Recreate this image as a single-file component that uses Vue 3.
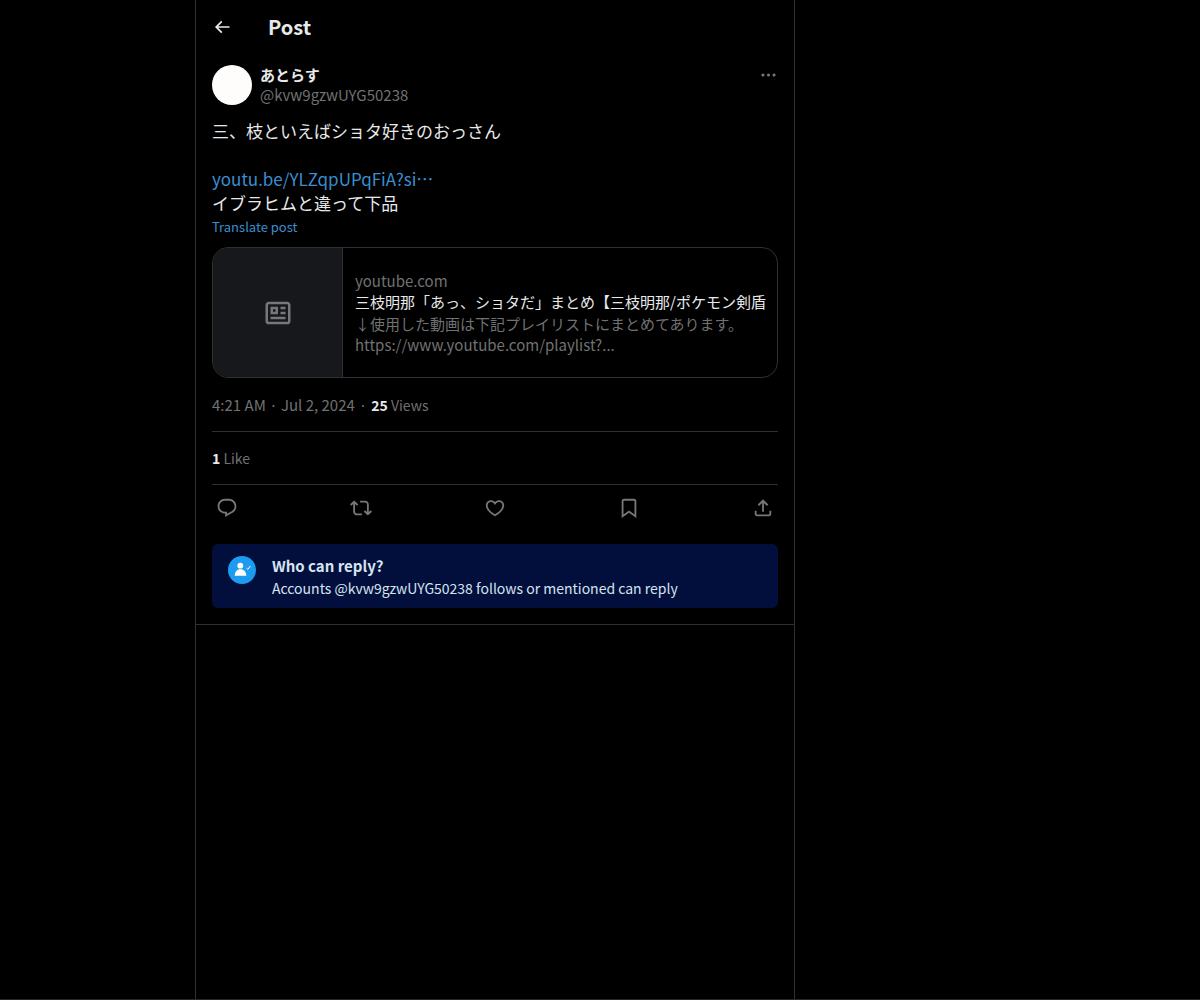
<script setup>
import { ref } from "vue";

const author = {
  name: "あとらす",
  handle: "@kvw9gzwUYG50238"
};

const card = {
  domain: "youtube.com",
  title: "三枝明那「あっ、ショタだ」まとめ【三枝明那/ポケモン剣盾",
  description: "↓使用した動画は下記プレイリストにまとめてあります。",
  url: "https://www.youtube.com/playlist?..."
};

const actions = ref([
  {
    label: "Reply",
    path: "M1.751 10c0-4.42 3.584-8 8.005-8h4.366c4.49 0 8.129 3.64 8.129 8.13 0 2.96-1.607 5.68-4.196 7.11l-8.054 4.46v-3.69h-.067c-4.49.1-8.183-3.51-8.183-8.01zm8.005-6c-3.317 0-6.005 2.69-6.005 6 0 3.37 2.77 6.08 6.138 6.01l.351-.01h1.761v2.3l5.087-2.81c1.951-1.08 3.163-3.13 3.163-5.36 0-3.39-2.744-6.13-6.129-6.13H9.756z"
  },
  {
    label: "Repost",
    path: "M4.5 3.88l4.432 4.14-1.364 1.46L5.5 7.55V16c0 1.1.896 2 2 2H13v2H7.5c-2.209 0-4-1.79-4-4V7.55L1.432 9.48.068 8.02 4.5 3.88zM16.5 6H11V4h5.5c2.209 0 4 1.79 4 4v8.45l2.068-1.93 1.364 1.46-4.432 4.14-4.432-4.14 1.364-1.46 2.068 1.93V8c0-1.1-.896-2-2-2z"
  },
  {
    label: "Like",
    path: "M16.697 5.5c-1.222-.06-2.679.51-3.89 2.16l-.805 1.09-.806-1.09C9.984 6.01 8.526 5.44 7.304 5.5c-1.243.07-2.349.78-2.91 1.91-.552 1.12-.633 2.78.479 4.82 1.074 1.97 3.257 4.27 7.129 6.61 3.87-2.34 6.052-4.64 7.126-6.61 1.111-2.04 1.03-3.7.477-4.82-.561-1.13-1.666-1.84-2.908-1.91zm4.187 7.69c-1.351 2.48-4.001 5.12-8.379 7.67l-.503.3-.504-.3c-4.379-2.55-7.029-5.19-8.382-7.67-1.36-2.5-1.41-4.86-.514-6.67.887-1.79 2.647-2.91 4.601-3.01 1.651-.09 3.368.56 4.798 2.01 1.429-1.45 3.146-2.1 4.796-2.01 1.954.1 3.714 1.22 4.601 3.01.896 1.81.846 4.17-.514 6.67z"
  },
  {
    label: "Bookmark",
    path: "M4 4.5C4 3.12 5.119 2 6.5 2h11C18.881 2 20 3.12 20 4.5v18.44l-8-5.71-8 5.71V4.5zM6.5 4c-.276 0-.5.22-.5.5v14.56l6-4.29 6 4.29V4.5c0-.28-.224-.5-.5-.5h-11z"
  },
  {
    label: "Share",
    path: "M12 2.59l5.7 5.7-1.41 1.42L13 6.41V16h-2V6.41l-3.3 3.3-1.41-1.42L12 2.59zM21 15l-.02 3.51c0 1.38-1.12 2.49-2.5 2.49H5.5C4.11 21 3 19.88 3 18.5V15h2v3.5c0 .28.22.5.5.5h12.98c.28 0 .5-.22.5-.5L19 15h2z"
  }
]);
</script>

<template>
  <div class="page">
    <main class="column">
      <header class="topbar">
        <button class="icon-btn back" aria-label="Back">
          <svg viewBox="0 0 24 24">
            <path d="M7.414 13l5.043 5.04-1.414 1.42L3.586 12l7.457-7.46 1.414 1.42L7.414 11H21v2H7.414z" />
          </svg>
        </button>
        <h1>Post</h1>
      </header>

      <article class="post">
        <div class="author">
          <div class="avatar"></div>
          <div class="names">
            <strong class="name">{{ author.name }}</strong>
            <span class="handle">{{ author.handle }}</span>
          </div>
          <button class="icon-btn more" aria-label="More">
            <svg viewBox="0 0 24 24">
              <path d="M3 12c0-1.1.9-2 2-2s2 .9 2 2-.9 2-2 2-2-.9-2-2zm9 2c1.1 0 2-.9 2-2s-.9-2-2-2-2 .9-2 2 .9 2 2 2zm7 0c1.1 0 2-.9 2-2s-.9-2-2-2-2 .9-2 2 .9 2 2 2z" />
            </svg>
          </button>
        </div>

        <div class="text" lang="ja">
          <p>三、枝といえばショタ好きのおっさん</p>
          <br />
          <p><a href="#">youtu.be/YLZqpUPqFiA?si…</a></p>
          <p>イブラヒムと違って下品</p>
        </div>
        <button class="translate">Translate post</button>

        <a class="card" href="#">
          <div class="thumb">
            <svg viewBox="0 0 24 24">
              <path d="M1.998 5.5c0-1.38 1.119-2.5 2.5-2.5h15c1.381 0 2.5 1.12 2.5 2.5v13c0 1.38-1.119 2.5-2.5 2.5h-15c-1.381 0-2.5-1.12-2.5-2.5v-13zm2.5-.5c-.276 0-.5.22-.5.5v13c0 .28.224.5.5.5h15c.276 0 .5-.22.5-.5v-13c0-.28-.224-.5-.5-.5h-15zM6 7h6v6H6V7zm2 2v2h2V9H8zm10 0h-4V7h4v2zm0 4h-4v-2h4v2zm-.002 4h-12v-2h12v2z" />
            </svg>
          </div>
          <div class="card-body">
            <span>{{ card.domain }}</span>
            <span class="card-title">{{ card.title }}</span>
            <span class="card-text">{{ card.description }}</span>
            <span>{{ card.url }}</span>
          </div>
        </a>

        <div class="meta">
          <a href="#">4:21 AM · Jul 2, 2024</a>
          <span>·</span>
          <span class="count"><strong>25</strong> Views</span>
        </div>
        <div class="likes count"><strong>1</strong> Like</div>

        <div class="actions">
          <button v-for="a in actions" :key="a.label" class="icon-btn" :aria-label="a.label">
            <svg viewBox="0 0 24 24"><path :d="a.path" /></svg>
          </button>
        </div>

        <section class="notice">
          <svg class="badge" viewBox="0 0 28 28">
            <circle cx="12.3" cy="9.700" r="2.900" />
            <path d="M6.700 19.800c.1-4 2.200-6.600 5.800-6.600s5.700 2.600 5.800 6.600z" />
            <path class="check" d="M18.500 12.200l1.300 1.200 2.600-3.400" />
          </svg>
          <div>
            <h2>Who can reply?</h2>
            <p>Accounts @kvw9gzwUYG50238 follows or mentioned can reply</p>
          </div>
        </section>
      </article>
    </main>
  </div>
</template>

<style>
body {
  margin: 0;
  background: #000;
}
</style>

<style scoped>
.page {
  display: grid;
  grid-template-columns: 195fr minmax(0, 600px) 405fr;
  min-height: 100vh;
  box-sizing: border-box;
  border-bottom: 1px solid #2a2627;
  color: #e7e9ea;
  font-family: "Noto Sans CJK JP", sans-serif;
  font-size: 15px;
  line-height: 20px;
}

.column {
  grid-column: 2;
  border-left: 1px solid #2f3031;
  border-right: 1px solid #2f3031;
}

h1,
h2,
p {
  margin: 0;
}

a {
  color: #3a8fd0;
  text-decoration: none;
}

button {
  padding: 0;
  border: none;
  background: none;
  font: inherit;
  cursor: pointer;
}

svg {
  display: block;
  fill: currentColor;
}

strong {
  color: #e7e9ea;
  font-weight: 700;
}

.icon-btn {
  color: #767778;
}

.topbar {
  display: flex;
  align-items: center;
  gap: 36px;
  height: 53px;
  padding: 0 16px;
}

.topbar h1 {
  font-size: 20px;
  line-height: 24px;
}

.back {
  color: #e7e9ea;
}

.back svg {
  width: 20px;
  height: 20px;
}

.post {
  padding: 12px 16px 16px;
  border-bottom: 1px solid #2f3031;
}

.author {
  display: flex;
  align-items: flex-start;
  gap: 8px;
}

.avatar {
  width: 40px;
  height: 40px;
  border-radius: 50%;
  background: #fffcfc;
}

.names {
  display: flex;
  flex: 1;
  flex-direction: column;
}

.handle,
.meta,
.meta a,
.likes {
  color: #707172;
}

.more svg {
  width: 19px;
  height: 20px;
}

.text {
  margin-top: 14px;
  font-size: 17px;
  line-height: 24px;
}

.translate {
  display: block;
  margin-top: 4px;
  color: #3a8fd0;
  font-size: 13px;
  line-height: 16px;
}

.card {
  display: flex;
  margin-top: 12px;
  overflow: hidden;
  border: 1px solid #2f3031;
  border-radius: 16px;
  color: #707172;
}

.thumb {
  display: flex;
  flex: none;
  align-items: center;
  justify-content: center;
  width: 129px;
  height: 129px;
  border-right: 1px solid #2f3031;
  background: #16181c;
}

.thumb svg {
  width: 30px;
  height: 30px;
  fill: #767778;
}

.card-body {
  display: flex;
  flex: 1;
  flex-direction: column;
  justify-content: center;
  min-width: 0;
  padding: 1px 11px 0 12px;
}

.card-body span {
  overflow: hidden;
  white-space: nowrap;
}

.card-body .card-title,
.card-body .card-text {
  line-height: 22px;
}

.card-body .card-title {
  color: #e7e9ea;
}

.meta {
  display: flex;
  gap: 4px;
  padding: 17px 0 16px;
  border-bottom: 1px solid #2f3031;
}

.count {
  font-size: 14px;
}

.likes {
  padding: 16px 0;
  border-bottom: 1px solid #2f3031;
}

.actions {
  display: flex;
  align-items: center;
  justify-content: space-between;
  height: 46px;
  padding: 0 4px;
}

.actions svg {
  width: 22px;
  height: 22px;
}

.notice {
  display: flex;
  gap: 16px;
  margin-top: 13px;
  padding: 12px 16px 10px;
  border-radius: 6px;
  background: #020f3c;
  color: #d6e4f0;
}

.notice h2 {
  font-size: 15px;
  line-height: 20px;
}

.notice p {
  margin-top: 2px;
  font-size: 14px;
}

.badge {
  flex: none;
  width: 28px;
  height: 28px;
  border-radius: 50%;
  background: #1d9bf0;
  color: #fff;
}

.check {
  fill: none;
  stroke: currentColor;
  stroke-width: 1;
}
</style>
